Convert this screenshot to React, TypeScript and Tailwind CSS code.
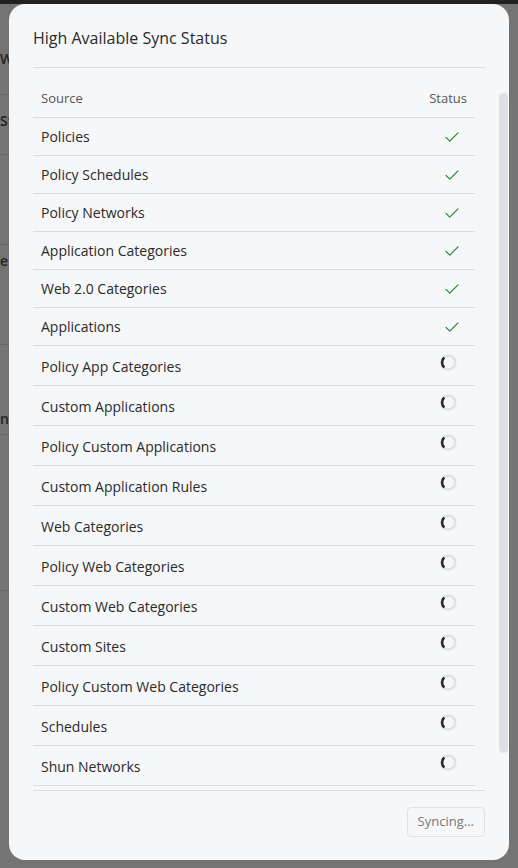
import React from "react";

const done = ["Policies","Policy Schedules","Policy Networks","Application Categories","Web 2.0 Categories","Applications"];
const pending = ["Policy App Categories","Custom Applications","Policy Custom Applications","Custom Application Rules","Web Categories","Policy Web Categories","Custom Web Categories","Custom Sites","Policy Custom Web Categories","Schedules","Shun Networks"];

const Check = () => (
  <svg width="18" height="18" viewBox="0 0 24 24" fill="none" stroke="#1f8a2e" strokeWidth="1.6" strokeLinecap="round" strokeLinejoin="round"><path d="M4 12.5l5 5L20 6.5"/></svg>
);
const Spin = () => (
  <svg width="19" height="19" viewBox="0 0 18 18"><circle cx="9" cy="9" r="6.5" fill="none" stroke="#e2e3e6" strokeWidth="2.5"/><path d="M5 4.2A6.5 6.5 0 0 0 5 13.8" fill="none" stroke="#2b2b2b" strokeWidth="2.5"/></svg>
);

export default function App() {
  return (
    <div className="relative w-[518px] h-[868px] overflow-hidden bg-[#747474]" style={{fontFamily:"'Open Sans', Inter, sans-serif"}}>
      <div className="h-[4px] bg-[#222]" />
      <div className="absolute left-0 top-[4px] w-[9px] h-[600px] text-[#222] text-[14px] font-semibold">
        <div className="absolute top-[44px]">W</div>
        <div className="absolute top-[90px] w-full border-t border-[#666]" />
        <div className="absolute top-[106px]">St</div>
        <div className="absolute top-[150px] w-full border-t border-[#666]" />
        <div className="absolute top-[240px] w-full border-t border-[#666]" />
        <div className="absolute top-[246px]">e</div>
        <div className="absolute top-[340px] w-full border-t border-[#666]" />
        <div className="absolute top-[404px]">n</div>
        <div className="absolute top-[430px] w-full border-t border-[#666]" />
        <div className="absolute top-[586px] w-full border-t border-[#666]" />
      </div>
      <div className="absolute left-[9px] top-[4px] w-[500px] h-[856px] rounded-[16px] bg-[#f6f7f9] flex flex-col">
        <div className="px-[24px] pt-[24px]">
          <div className="text-[16px] text-[#2a2a2a] h-[20px] leading-[20px]">High Available Sync Status</div>
          <div className="mt-[19px] border-t border-[#dcdde1]" />
        </div>
        <div className="flex h-[710px] mt-[12px] pl-[24px] pr-[1px]">
          <div className="flex-1 overflow-hidden">
            <div className="flex items-center justify-between h-[38px] pl-[8px] pr-[8px] border-b border-[#dcdde1] text-[13px] text-[#555]">
              <span>Source</span><span>Status</span>
            </div>
            {done.map(n => (
              <div key={n} className="flex items-center justify-between h-[38px] pl-[8px] pr-[14px] border-b border-[#dcdde1] text-[14px] text-[#2a2a2a]">
                <span>{n}</span><Check />
              </div>
            ))}
            {pending.map(n => (
              <div key={n} className="flex justify-between h-[40px] pl-[8px] pr-[17px] border-b border-[#dcdde1] text-[14px] text-[#2a2a2a]">
                <span className="mt-[10px]">{n}</span><span className="mt-[7px]"><Spin /></span>
              </div>
            ))}
          </div>
          <div className="w-[9px] ml-[24px] pt-[13px]">
            <div className="w-[9px] h-[660px] rounded-full bg-[#dde0e6]" />
          </div>
        </div>
        <div className="mx-[24px] border-t border-[#dcdde1]" />
        <div className="flex justify-end px-[24px] mt-[16px]">
          <button className="h-[30px] px-[10px] rounded-[4px] border border-[#dfe1e5] text-[13px] text-[#777]">Syncing...</button>
        </div>
      </div>
    </div>
  );
}
